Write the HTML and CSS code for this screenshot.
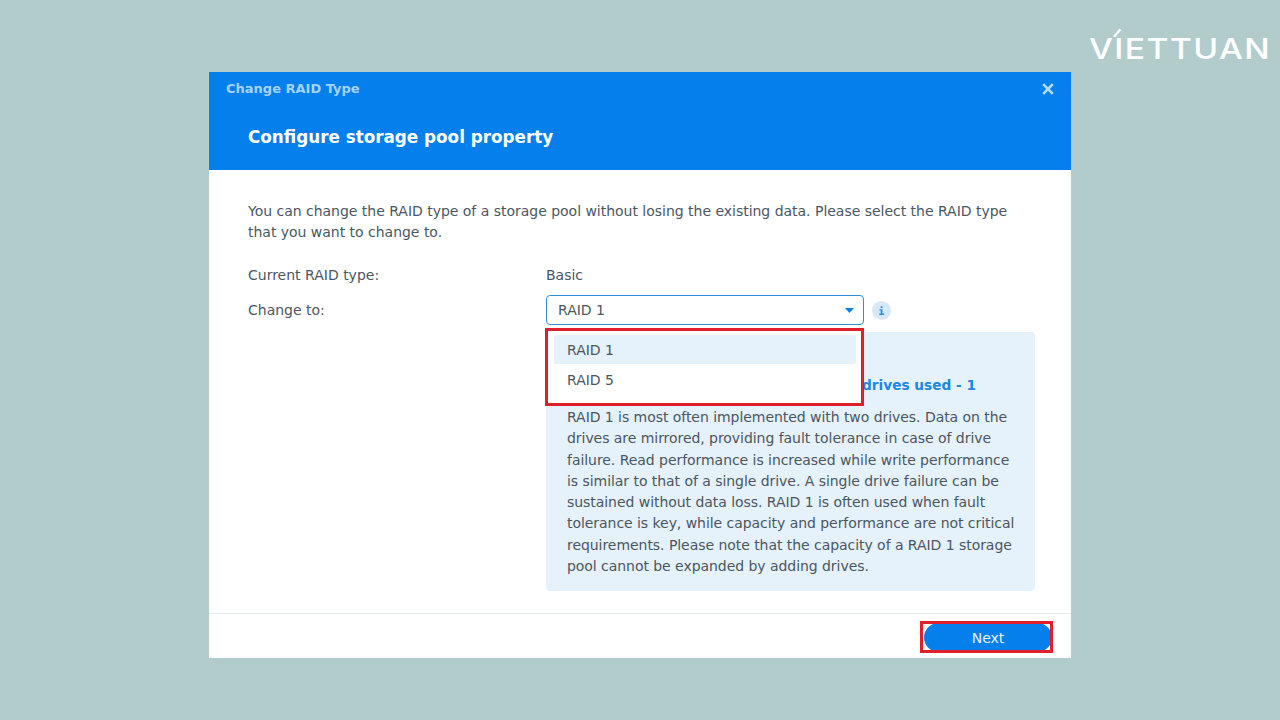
FILE: index.html
```html
<!DOCTYPE html>
<html lang="en">
<head>
<meta charset="utf-8">
<title>Change RAID Type</title>
<link rel="stylesheet" href="styles.css">
</head>
<body>
<div class="stage">
  <div class="logo"><span class="logo-slash"></span>VIETTUAN</div>
  <main class="dialog">
    <header class="dialog-head">
      <div class="title-bar">
        <span class="window-title">Change RAID Type</span>
        <svg class="close" width="12" height="12" viewBox="0 0 12 12"><path d="M1.2 1.2l9.6 9.6M10.8 1.2l-9.6 9.6" stroke="#b5dcfb" stroke-width="2.6" fill="none"/></svg>
      </div>
      <h1 class="step-title">Configure storage pool property</h1>
    </header>
    <section class="dialog-body">
      <p class="intro">You can change the RAID type of a storage pool without losing the existing data. Please select the RAID type that you want to change to.</p>
      <div class="form-row current">
        <span class="label">Current RAID type:</span>
        <span class="value">Basic</span>
      </div>
      <div class="form-row change">
        <span class="label">Change to:</span>
        <div class="field">
          <div class="select-wrap">
            <div class="select">
              <span>RAID 1</span>
              <svg class="caret" width="9" height="5" viewBox="0 0 9 5"><path d="M0 0h9L4.5 5z" fill="#057feb"/></svg>
            </div>
            <div class="menu">
              <div class="menu-item active">RAID 1</div>
              <div class="menu-item">RAID 5</div>
            </div>
          </div>
          <span class="info"><svg width="8" height="10" viewBox="0 0 8 10"><path d="M3 0h2.2v2H3zM1.6 3.6h3.6v4.9H7V10H1.4V8.5h1.7V5.1H1.6z" fill="#2b8fe3"/></svg></span>
        </div>
      </div>
      <div class="info-row">
        <aside class="info-box">
          <h2 class="box-title">drives used - 1</h2>
          <p class="box-text">RAID 1 is most often implemented with two drives. Data on the drives are mirrored, providing fault tolerance in case of drive failure. Read performance is increased while write performance is similar to that of a single drive. A single drive failure can be sustained without data loss. RAID 1 is often used when fault tolerance is key, while capacity and performance are not critical requirements. Please note that the capacity of a RAID 1 storage pool cannot be expanded by adding drives.</p>
        </aside>
      </div>
    </section>
    <footer class="dialog-foot">
      <button class="next">Next</button>
    </footer>
  </main>
</div>
</body>
</html>
```
FILE: styles.css
```css
*, *::before, *::after { box-sizing: border-box; }
html, body { margin: 0; height: 100%; }
body {
  background: #b2cccc;
  font-family: "DejaVu Sans", Verdana, sans-serif;
  font-size: 14px;
  color: #4a5761;
  overflow: hidden;
}
.stage {
  position: relative;
  width: 1280px;
  height: 720px;
  padding: 72px 209px 62px;
}
.logo {
  position: absolute;
  left: 1089px;
  top: 32px;
  font-family: "Inter", sans-serif;
  font-weight: 500;
  font-size: 28px;
  line-height: 34px;
  letter-spacing: 1.2px;
  color: #fff;
  white-space: nowrap;
  transform: scaleX(1.2);
  transform-origin: left center;
}
.logo-slash {
  position: absolute;
  left: 19px;
  top: 0;
  width: 9px;
  height: 2px;
  background: #fff;
  transform: rotate(-55deg);
}
.dialog {
  width: 862px;
  height: 586px;
  background: #fff;
  display: flex;
  flex-direction: column;
}
.dialog-head {
  height: 98px;
  background: #057feb;
  flex: none;
}
.title-bar {
  height: 33px;
  padding: 0 17px;
  display: flex;
  align-items: center;
  justify-content: space-between;
}
.window-title {
  font-size: 13px;
  font-weight: 700;
  color: #a5d3f9;
}
.step-title {
  margin: 0;
  padding: 19px 39px 0;
  font-size: 16.8px;
  line-height: 26px;
  font-weight: 700;
  color: #fff;
}
.dialog-body {
  flex: 1;
  padding: 31px 36px 0 39px;
}
.intro {
  margin: 0;
  line-height: 21px;
  letter-spacing: -0.02px;
}
.form-row {
  display: grid;
  grid-template-columns: 298px 1fr;
  align-items: center;
}
.current { margin-top: 22px; height: 20px; }
.change { margin-top: 10px; height: 30px; }
.field { display: flex; align-items: center; gap: 8px; }
.select-wrap { position: relative; width: 318px; }
.select {
  height: 30px;
  border: 1px solid #2d8fd9;
  border-radius: 4px;
  padding: 0 9px 0 11px;
  display: flex;
  align-items: center;
  justify-content: space-between;
}
.menu {
  position: absolute;
  z-index: 2;
  left: 0;
  top: 31px;
  width: 318px;
  height: 79px;
  background: #fff;
  padding: 9px 8px 0;
}
.menu-item {
  height: 30px;
  padding: 0 13px;
  display: flex;
  align-items: center;
  border-radius: 2px;
}
.menu-item.active { background: #e5f1fb; height: 29px; margin-bottom: 1px; }
.info {
  width: 19px;
  height: 19px;
  border-radius: 50%;
  background: #d7e9f9;
  display: flex;
  align-items: center;
  justify-content: center;
}
.info svg { width: 7px; height: 9px; }
.info-row { padding-left: 298px; margin-top: 7px; }
.info-box {
  width: 489px;
  height: 259px;
  background: #e5f1fb;
  border-radius: 4px;
  padding: 43px 14px 0 21px;
}
.box-title {
  margin: 0 0 0 295px;
  font-size: 13.7px;
  line-height: 21px;
  font-weight: 700;
  color: #1c88e0;
  white-space: nowrap;
}
.box-text {
  margin: 11px 0 0;
  line-height: 21.3px;
  letter-spacing: -0.05px;
}
.dialog-foot {
  height: 45px;
  flex: none;
  border-top: 1px solid #e6ecf0;
  padding: 9px 19px 0 0;
  display: flex;
  justify-content: flex-end;
  align-items: flex-start;
}
.next {
  position: relative;
  width: 128px;
  height: 29px;
  border: 0;
  border-radius: 15px;
  background: #057feb;
  color: #e5f3fe;
  font: inherit;
  padding: 0;
}
.next::after {
  content: "";
  position: absolute;
  left: -4px;
  top: -2px;
  width: 133px;
  height: 32px;
  border: 3px solid #e01f2d;
}
.menu::after {
  content: "";
  position: absolute;
  left: -1px;
  top: 2px;
  width: 319px;
  height: 78px;
  border: 3px solid #e01f2d;
}
```
